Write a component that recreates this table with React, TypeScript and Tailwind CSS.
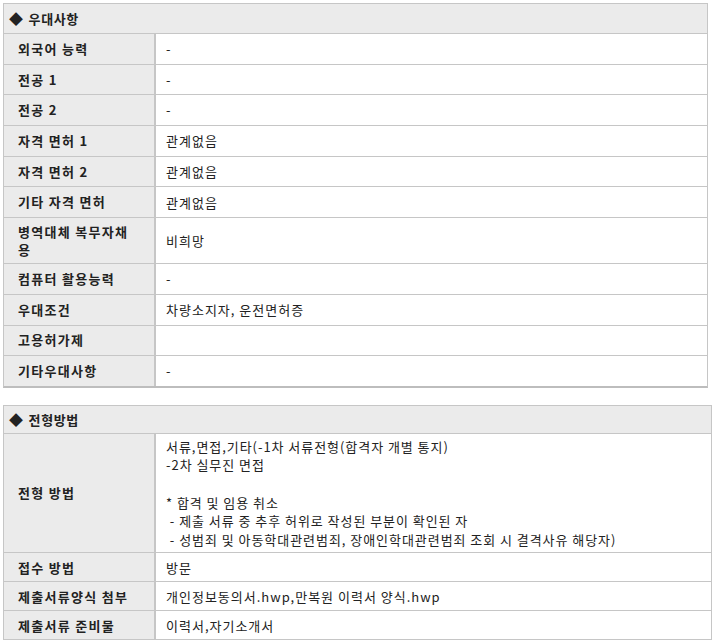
import React from "react";

const rows1: { label: string; value: string; tall?: boolean }[] = [
  { label: "외국어 능력", value: "-" },
  { label: "전공 1", value: "-" },
  { label: "전공 2", value: "-" },
  { label: "자격 면허 1", value: "관계없음" },
  { label: "자격 면허 2", value: "관계없음" },
  { label: "기타 자격 면허", value: "관계없음" },
  { label: "병역대체 복무자채용", value: "비희망", tall: true },
  { label: "컴퓨터 활용능력", value: "-" },
  { label: "우대조건", value: "차량소지자, 운전면허증" },
  { label: "고용허가제", value: "" },
  { label: "기타우대사항", value: "-" },
];

const rows2: { label: string; value: string }[] = [
  { label: "접수 방법", value: "방문" },
  { label: "제출서류양식 첨부", value: "개인정보동의서.hwp,만복원 이력서 양식.hwp" },
  { label: "제출서류 준비물", value: "이력서,자기소개서" },
];

const font = {
  fontFamily: '"Noto Sans CJK KR", "Noto Sans", sans-serif',
};

export default function App() {
  return (
    <div
      className="w-[717px] h-[642px] bg-white text-[13px] text-[#222] pt-[3px] pl-[3px] overflow-hidden"
      style={font}
    >
      <div className="w-[705px] border border-[#c6c6c6] border-b-2 border-b-[#bdbdbd]">
        <div className="h-[29px] bg-[#ebebeb] flex items-center pl-[5px] font-bold tracking-[0.6px]">
          <span className="mr-[5px] text-[14px]">◆</span>우대사항
        </div>
        {rows1.map((r) => (
          <div
            key={r.label}
            className={`grid grid-cols-[152px_1fr] border-t border-[#c6c6c6] ${
              r.tall ? "h-[46px]" : "h-[30.7px]"
            }`}
          >
            <div className="bg-[#ebebeb] border-r-2 border-[#c6c6c6] flex items-center pl-[14px] pr-[20px] font-semibold leading-[18px] tracking-[1.3px]">
              {r.label}
            </div>
            <div className="flex items-center pl-[10px] tracking-[1px]">{r.value}</div>
          </div>
        ))}
      </div>

      <div className="mt-[17px] w-[709px] border border-[#c6c6c6]">
        <div className="h-[27px] bg-[#ebebeb] flex items-center pl-[5px] font-bold tracking-[0.6px]">
          <span className="mr-[5px] text-[14px]">◆</span>전형방법
        </div>
        <div className="grid grid-cols-[152px_1fr] border-t border-[#c6c6c6]">
          <div className="bg-[#ebebeb] border-r-2 border-[#c6c6c6] flex items-center pl-[14px] font-semibold tracking-[1.3px]">
            전형 방법
          </div>
          <div className="pl-[10px] pt-[4px] pb-[3px] leading-[18.6px] whitespace-pre tracking-[0.95px]">
            {
              "서류,면접,기타(-1차 서류전형(합격자 개별 통지)\n-2차 실무진 면접\n\n* 합격 및 임용 취소\n - 제출 서류 중 추후 허위로 작성된 부분이 확인된 자\n - 성범죄 및 아동학대관련범죄, 장애인학대관련범죄 조회 시 결격사유 해당자)"
            }
          </div>
        </div>
        {rows2.map((r) => (
          <div
            key={r.label}
            className="grid grid-cols-[152px_1fr] border-t border-[#c6c6c6] h-[29px]"
          >
            <div className="bg-[#ebebeb] border-r-2 border-[#c6c6c6] flex items-center pl-[14px] font-semibold tracking-[1.3px] whitespace-nowrap">
              {r.label}
            </div>
            <div className="flex items-center pl-[10px] tracking-[1px]">{r.value}</div>
          </div>
        ))}
      </div>
    </div>
  );
}
